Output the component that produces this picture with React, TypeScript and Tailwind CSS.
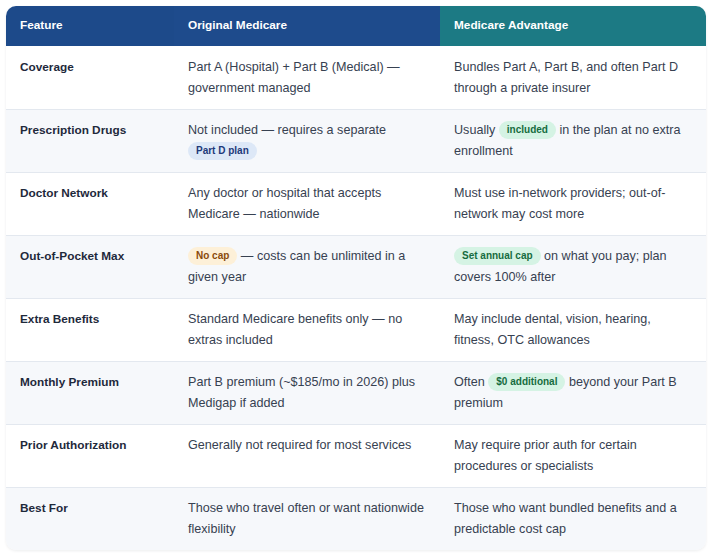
import React from 'react';

type Tone = 'blue' | 'green' | 'amber';

const toneClass: Record<Tone, string> = {
  blue: 'bg-[#dde8f7] text-[#1e3a7a]',
  green: 'bg-[#d5f3e4] text-[#166c3f]',
  amber: 'bg-[#fdf0d8] text-[#8a4a0c]',
};

const Badge = ({ tone, children }: { tone: Tone; children: React.ReactNode }) => (
  <span
    className={`inline-block rounded-full px-2 py-[2px] text-[10px] font-bold leading-[14px] align-[1px] ${toneClass[tone]}`}
  >
    {children}
  </span>
);

const rows: { feature: string; original: React.ReactNode; advantage: React.ReactNode }[] = [
  {
    feature: 'Coverage',
    original: 'Part A (Hospital) + Part B (Medical) — government managed',
    advantage: 'Bundles Part A, Part B, and often Part D through a private insurer',
  },
  {
    feature: 'Prescription Drugs',
    original: (
      <>
        Not included — requires a separate <Badge tone="blue">Part D plan</Badge>
      </>
    ),
    advantage: (
      <>
        Usually <Badge tone="green">included</Badge> in the plan at no extra enrollment
      </>
    ),
  },
  {
    feature: 'Doctor Network',
    original: 'Any doctor or hospital that accepts Medicare — nationwide',
    advantage: 'Must use in-network providers; out-of-network may cost more',
  },
  {
    feature: 'Out-of-Pocket Max',
    original: (
      <>
        <Badge tone="amber">No cap</Badge> — costs can be unlimited in a given year
      </>
    ),
    advantage: (
      <>
        <Badge tone="green">Set annual cap</Badge> on what you pay; plan covers 100% after
      </>
    ),
  },
  {
    feature: 'Extra Benefits',
    original: 'Standard Medicare benefits only — no extras included',
    advantage: 'May include dental, vision, hearing, fitness, OTC allowances',
  },
  {
    feature: 'Monthly Premium',
    original: 'Part B premium (~$185/mo in 2026) plus Medigap if added',
    advantage: (
      <>
        Often <Badge tone="green">$0 additional</Badge> beyond your Part B premium
      </>
    ),
  },
  {
    feature: 'Prior Authorization',
    original: 'Generally not required for most services',
    advantage: 'May require prior auth for certain procedures or specialists',
  },
  {
    feature: 'Best For',
    original: 'Those who travel often or want nationwide flexibility',
    advantage: 'Those who want bundled benefits and a predictable cost cap',
  },
];

export default function App() {
  return (
    <div className="min-h-screen bg-white p-1.5 font-['Liberation_Sans',Arial,sans-serif]">
      <div className="overflow-hidden rounded-[10px] shadow-[0_1px_3px_rgba(15,23,42,0.08)]">
        <table className="w-full table-fixed border-collapse text-left">
          <colgroup>
            <col className="w-[168px]" />
            <col className="w-[266px]" />
            <col />
          </colgroup>
          <thead>
            <tr className="text-[11.8px] font-bold text-white">
              <th className="h-10 bg-[#1d4a8a] px-3.5 pt-px">Feature</th>
              <th className="h-10 bg-[#1e4b8c] px-3.5 pt-px">Original Medicare</th>
              <th className="h-10 bg-[#1c7a84] px-3.5 pt-px">Medicare Advantage</th>
            </tr>
          </thead>
          <tbody>
            {rows.map((row, i) => (
              <tr
                key={row.feature}
                className={`border-t align-top text-[12.6px] leading-[21px] ${
                  i > 0 ? 'border-[#e3e8ef]' : 'border-white'
                } ${i % 2 === 1 ? 'bg-[#f6f8fb]' : 'bg-white'}`}
              >
                <td className="px-3.5 py-2.5 text-[11.8px] font-bold text-[#1e293b]">{row.feature}</td>
                <td className="px-3.5 py-2.5 text-[#374151]">{row.original}</td>
                <td className="px-3.5 py-2.5 text-[#374151]">{row.advantage}</td>
              </tr>
            ))}
          </tbody>
        </table>
      </div>
    </div>
  );
}
